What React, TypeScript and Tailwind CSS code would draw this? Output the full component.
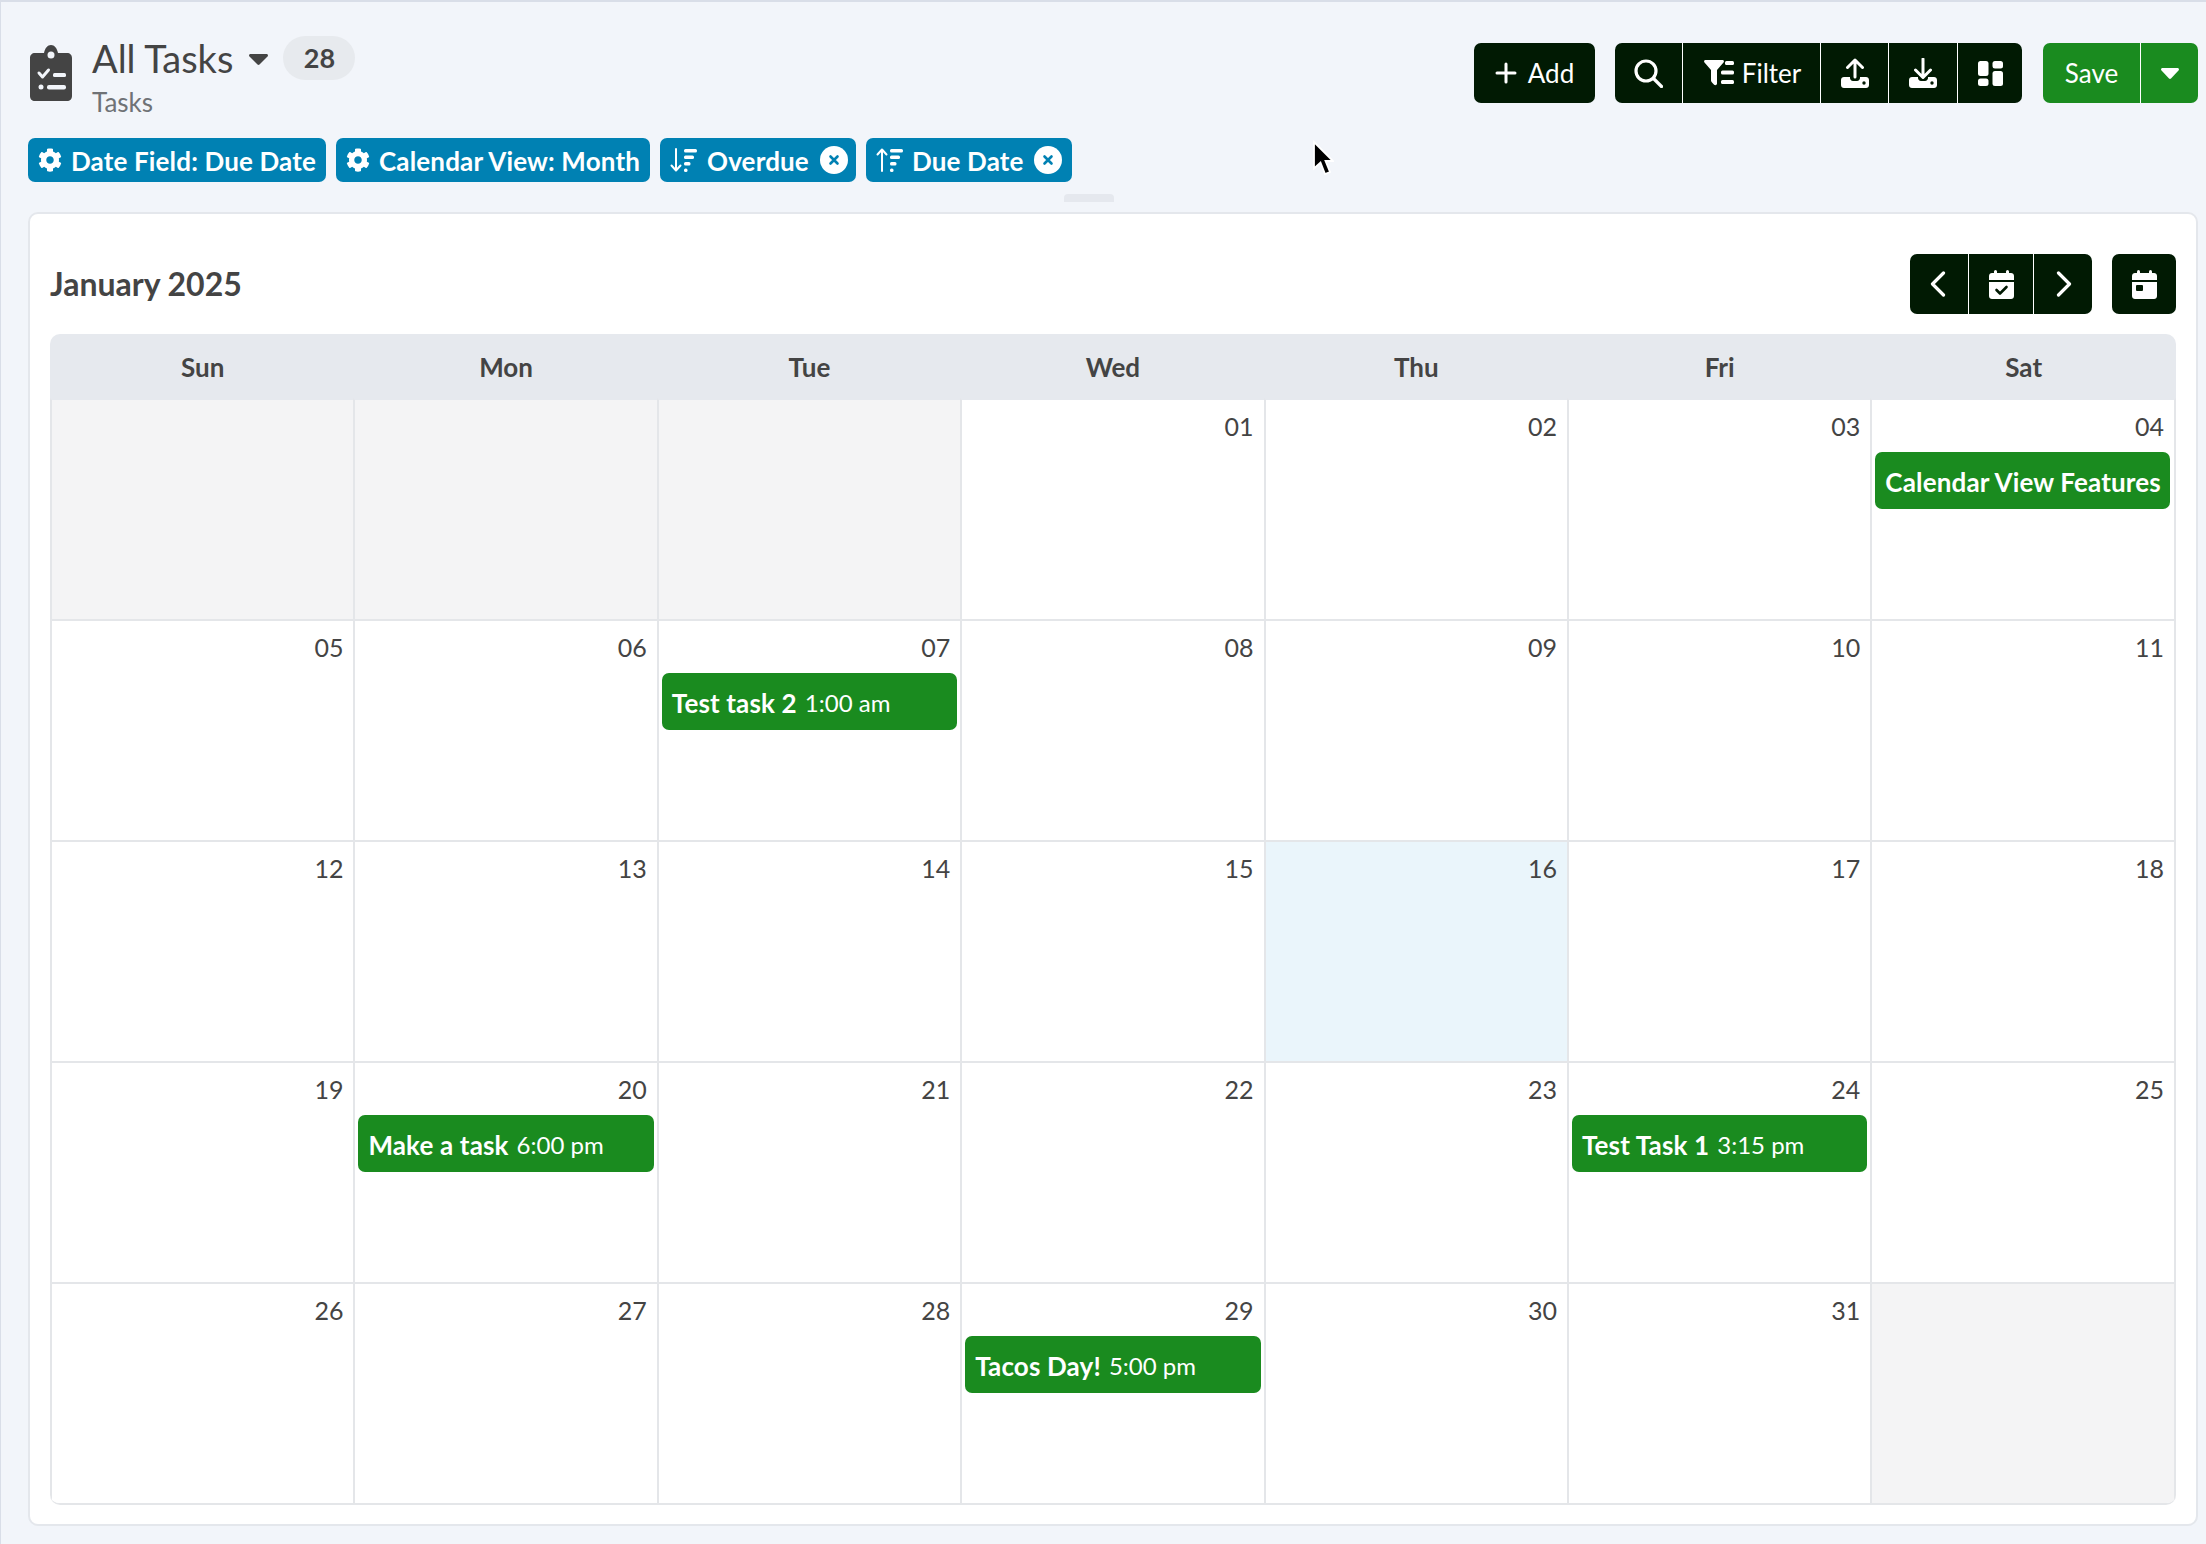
import React from "react";
import { FaCog } from "react-icons/fa";

const ff = "font-['Lato','Liberation_Sans',sans-serif]";

function ClipboardIcon() {
  return (
    <svg width="42" height="56" viewBox="0 0 42 56" className="shrink-0">
      <path d="M5 8h9c1-5 3.500-8 7-8s6 3 7 8h9c3 0 5 2 5 5v38c0 3-2 5-5 5H5c-3 0-5-2-5-5V13c0-3 2-5 5-5z" fill="#444444" />
      <circle cx="21" cy="10" r="3.500" fill="#f2f5fa" />
      <path d="M9 28l3.500 4 6-7" fill="none" stroke="#f2f5fa" strokeWidth="3" strokeLinecap="round" strokeLinejoin="round" />
      <rect x="23" y="28" width="13" height="4" rx="1.500" fill="#f2f5fa" />
      <circle cx="11" cy="42" r="2.500" fill="#f2f5fa" />
      <rect x="17" y="40" width="19" height="4.500" rx="2" fill="#f2f5fa" />
    </svg>
  );
}

function SortIcon({ up }: { up?: boolean }) {
  return (
    <svg width="27" height="24" viewBox="0 0 27 24" className="shrink-0" fill="#ffffff">
      {up ? (
        <path d="M6 23V2M1.500 6.500L6 1.500l4.500 5" fill="none" stroke="#fff" strokeWidth="2" strokeLinecap="round" strokeLinejoin="round" />
      ) : (
        <path d="M6 1v21M1.500 17.500l4.500 5 4.500-5" fill="none" stroke="#fff" strokeWidth="2" strokeLinecap="round" strokeLinejoin="round" />
      )}
      <rect x="14" y="1" width="13" height="3.500" rx="1.500" />
      <rect x="14" y="7.500" width="10" height="3.500" rx="1.500" />
      <rect x="14" y="14" width="6.500" height="3.500" rx="1.500" />
      <rect x="14" y="20.500" width="3.500" height="3.500" rx="1.500" />
    </svg>
  );
}

function ClearDot() {
  return (
    <span className="flex h-[28px] w-[28px] shrink-0 items-center justify-center rounded-full bg-white">
      <svg width="12" height="12" viewBox="0 0 12 12">
        <path d="M2.500 2.500l7 7M9.500 2.500l-7 7" stroke="#0081b3" strokeWidth="2.600" strokeLinecap="round" />
      </svg>
    </span>
  );
}

function Chip({ children, w }: { children: React.ReactNode; w: string }) {
  return (
    <div className={`flex h-[44px] items-center rounded-[7px] bg-[#0081b3] pl-[10px] text-[26px] font-bold tracking-[0.15px] whitespace-nowrap text-white ${w}`}>
      {children}
    </div>
  );
}

function Search() {
  return (
    <svg width="29" height="29" viewBox="0 0 29 29" fill="none" stroke="#fff" strokeWidth="3.200" strokeLinecap="round">
      <circle cx="12" cy="12" r="10" />
      <path d="M19.500 19.500l8 8" />
    </svg>
  );
}

function FilterIcon() {
  return (
    <svg width="30" height="26" viewBox="0 0 30 26" fill="#fff">
      <path d="M1.500 0h17c1.300 0 1.900 1.500 1 2.400L13 10v13.500c0 1.500-1.800 2.200-2.900 1.200L8 22.500c-.6-.5-1-1.200-1-2V10L.5 2.400C-.4 1.500.2 0 1.500 0z" />
      <rect x="21" y="1" width="9" height="4" rx="1.500" />
      <rect x="17" y="10.500" width="13" height="4" rx="1.500" />
      <rect x="17" y="20" width="13" height="4" rx="1.500" />
    </svg>
  );
}

function TrayIcon({ down }: { down?: boolean }) {
  return (
    <svg width="28" height="30" viewBox="0 0 28 30" fill="#fff">
      {down ? (
        <path d="M14 1v18M6.500 12l7.500 7.500L21.500 12" fill="none" stroke="#fff" strokeWidth="3" strokeLinecap="round" strokeLinejoin="round" />
      ) : (
        <path d="M14 19V2M6.500 9.500L14 2l7.500 7.500" fill="none" stroke="#fff" strokeWidth="3" strokeLinecap="round" strokeLinejoin="round" />
      )}
      <path d="M3 19h6v1c0 1.500 1.200 3 3 3h4c1.800 0 3-1.500 3-3v-1h6c1.700 0 3 1.300 3 3v5c0 1.700-1.300 3-3 3H3c-1.700 0-3-1.300-3-3v-5c0-1.700 1.300-3 3-3z" />
      <circle cx="23" cy="25" r="1.700" fill="#011a03" />
    </svg>
  );
}

function WidgetsIcon() {
  return (
    <svg width="25" height="25" viewBox="0 0 25 25" fill="#fff">
      <rect x="0" y="0" width="10.500" height="15" rx="2.500" />
      <rect x="0" y="17.500" width="10.500" height="7.500" rx="2.500" />
      <rect x="14.500" y="0" width="10.500" height="7.500" rx="2.500" />
      <rect x="14.500" y="10" width="10.500" height="15" rx="2.500" />
    </svg>
  );
}

function CalendarIcon({ check }: { check?: boolean }) {
  return (
    <svg width="25" height="29" viewBox="0 0 25 29" fill="#fff">
      <rect x="5" y="0" width="3" height="6" rx="1.500" />
      <rect x="17" y="0" width="3" height="6" rx="1.500" />
      <path d="M3 3h19c1.700 0 3 1.300 3 3v4H0V6c0-1.700 1.300-3 3-3z" />
      <path d="M0 12h25v14c0 1.700-1.300 3-3 3H3c-1.700 0-3-1.300-3-3z" />
      {check ? (
        <path d="M7.500 20l3.500 3.500 6.500-6.500" fill="none" stroke="#011a03" strokeWidth="2.600" strokeLinecap="round" strokeLinejoin="round" />
      ) : (
        <rect x="4" y="15" width="7" height="6" rx="1" fill="#011a03" />
      )}
    </svg>
  );
}

type Ev = { title: string; time?: string };
type Day = { n?: string; ev?: Ev; today?: boolean };

const weeks: Day[][] = [
  [{}, {}, {}, { n: "01" }, { n: "02" }, { n: "03" }, { n: "04", ev: { title: "Calendar View Features" } }],
  [{ n: "05" }, { n: "06" }, { n: "07", ev: { title: "Test task 2", time: "1:00 am" } }, { n: "08" }, { n: "09" }, { n: "10" }, { n: "11" }],
  [{ n: "12" }, { n: "13" }, { n: "14" }, { n: "15" }, { n: "16", today: true }, { n: "17" }, { n: "18" }],
  [{ n: "19" }, { n: "20", ev: { title: "Make a task", time: "6:00 pm" } }, { n: "21" }, { n: "22" }, { n: "23" }, { n: "24", ev: { title: "Test Task 1", time: "3:15 pm" } }, { n: "25" }],
  [{ n: "26" }, { n: "27" }, { n: "28" }, { n: "29", ev: { title: "Tacos Day!", time: "5:00 pm" } }, { n: "30" }, { n: "31" }, {}],
];

const heads = ["Sun", "Mon", "Tue", "Wed", "Thu", "Fri", "Sat"];

function Cell({ d, last, first }: { d: Day; last: boolean; first: boolean }) {
  const bg = !d.n ? "bg-[#f4f4f5]" : d.today ? "bg-[#eaf5fb]" : "bg-white";
  return (
    <div className={`h-[221px] min-w-0 border-t-2 border-l-2 border-[#e4e6e9] pt-[11px] ${first ? "border-t-[#e6e9ee]" : ""} ${last ? "border-r-2" : ""} ${bg}`}>
      <div className="h-[30px] pr-[10px] text-right text-[25px] leading-[30px] text-[#444444]">{d.n}</div>
      {d.ev && (
        <div className={`mt-[11px] ml-[3px] flex h-[57px] items-center overflow-hidden rounded-[7px] bg-[#1a8b1f] pt-[3px] pl-[10px] whitespace-nowrap text-white ${last ? "mr-[4px]" : "mr-[3px]"}`}>
          <span className="text-[26px] font-bold tracking-[0.15px]">{d.ev.title}</span>
          {d.ev.time && <span className="ml-[8px] text-[24px]">{d.ev.time}</span>}
        </div>
      )}
    </div>
  );
}

export default function App() {
  return (
    <div className={`relative flex h-[1544px] w-[2206px] flex-col overflow-hidden border-t-2 border-l border-[#d9dee8] bg-[#f2f5fa] pr-[8px] pl-[27px] text-[#444444] ${ff}`}>
      <header className="flex h-[136px] shrink-0 items-start justify-between pt-[33px]">
        <div className="flex items-start">
          <div className="mt-[10px] ml-[2px]">
            <ClipboardIcon />
          </div>
          <div className="ml-[20px]">
            <div className="flex items-center">
              <h1 className="text-[38px] leading-[46px] font-normal text-[#444444]">All Tasks</h1>
              <svg width="19" height="11" viewBox="0 0 19 11" className="mt-[2px] ml-[16px]">
                <path d="M1.500 0h16c1.300 0 2 1.500 1 2.500l-8 8c-.6.600-1.400.600-2 0l-8-8C-.5 1.500.2 0 1.500 0z" fill="#444444" />
              </svg>
              <div className="ml-[15px] flex h-[44px] w-[72px] items-center justify-center rounded-full bg-[#e7eaee] text-[27px] font-bold">28</div>
            </div>
            <div className="mt-[6px] text-[26px] leading-[30px] text-[#6f7276]">Tasks</div>
          </div>
        </div>
        <div className="mt-[8px] flex h-[60px] items-stretch text-white">
          <button className="flex w-[121px] items-center justify-center gap-[11px] rounded-[7px] bg-[#011a03] text-[26px]">
            <svg width="22" height="22" viewBox="0 0 22 22" stroke="#fff" strokeWidth="3" strokeLinecap="round">
              <path d="M11 2v18M2 11h18" />
            </svg>
            Add
          </button>
          <div className="ml-[20px] flex overflow-hidden rounded-[7px] bg-[#011a03]">
            <button className="flex w-[67px] items-center justify-center"><Search /></button>
            <button className="flex w-[138px] items-center justify-center gap-[8px] border-l border-white pl-[2px] text-[26px]"><FilterIcon />Filter</button>
            <button className="flex w-[68px] items-center justify-center border-l border-white"><TrayIcon /></button>
            <button className="flex w-[69px] items-center justify-center border-l border-white"><TrayIcon down /></button>
            <button className="flex w-[65px] items-center justify-center border-l border-white"><WidgetsIcon /></button>
          </div>
          <div className="ml-[21px] flex overflow-hidden rounded-[7px] bg-[#1a8b1f]">
            <button className="flex w-[97px] items-center justify-center text-[26px]">Save</button>
            <button className="flex w-[58px] items-center justify-center border-l border-white">
              <svg width="18" height="11" viewBox="0 0 18 11"><path d="M1.500 0h15c1.300 0 2 1.500 1 2.500l-7.500 8c-.6.600-1.400.600-2 0l-7.500-8C-.5 1.500.2 0 1.500 0z" fill="#fff" /></svg>
            </button>
          </div>
        </div>
      </header>

      <div className="flex h-[44px] shrink-0 gap-[10px]">
        <Chip w="w-[298px]"><FaCog size={24} className="mr-[9px] shrink-0" /><span className="mt-[2px]">Date Field: Due Date</span></Chip>
        <Chip w="w-[314px]"><FaCog size={24} className="mr-[9px] shrink-0" /><span className="mt-[2px]">Calendar View: Month</span></Chip>
        <Chip w="w-[196px]"><SortIcon /><span className="mt-[2px] mr-[11px] ml-[10px]">Overdue</span><ClearDot /></Chip>
        <Chip w="w-[206px]"><SortIcon up /><span className="mt-[2px] mr-[10px] ml-[9px]">Due Date</span><ClearDot /></Chip>
      </div>

      <div className="mt-[12px] ml-[1036px] h-[8px] w-[50px] shrink-0 rounded-t-[4px] bg-[#e5e8ee]" />

      <main className="mt-[10px] flex h-[1314px] shrink-0 flex-col rounded-[10px] border-2 border-[#e4e7ec] bg-white px-[20px] pt-[40px]">
        <div className="flex h-[60px] shrink-0 items-center justify-between">
          <h2 className="text-[32px] font-bold text-[#444444]">January 2025</h2>
          <div className="flex h-[60px] text-white">
            <div className="flex overflow-hidden rounded-[7px] bg-[#011a03]">
              <button className="flex w-[58px] items-center justify-center pr-[2px]">
                <svg width="16" height="26" viewBox="0 0 16 26" fill="none" stroke="#fff" strokeWidth="3.200" strokeLinecap="round" strokeLinejoin="round"><path d="M13.500 2L2.500 13l11 11" /></svg>
              </button>
              <button className="flex w-[66px] items-center justify-center border-x border-white"><CalendarIcon check /></button>
              <button className="flex w-[58px] items-center justify-center pl-[2px]">
                <svg width="16" height="26" viewBox="0 0 16 26" fill="none" stroke="#fff" strokeWidth="3.200" strokeLinecap="round" strokeLinejoin="round"><path d="M2.500 2l11 11-11 11" /></svg>
              </button>
            </div>
            <button className="ml-[20px] flex w-[64px] items-center justify-center rounded-[7px] bg-[#011a03]"><CalendarIcon /></button>
          </div>
        </div>

        <div className="mt-[20px] overflow-hidden rounded-[10px] border-b-2 border-[#e4e6e9]">
          <div className="grid h-[64px] grid-cols-[repeat(6,303.4px)_1fr] items-center bg-[#e6e9ee] pt-[3px] pl-[1px]">
            {heads.map((h) => (
              <div key={h} className="text-center text-[26px] font-bold text-[#444444]">{h}</div>
            ))}
          </div>
          {weeks.map((w, i) => (
            <div key={i} className="grid grid-cols-[repeat(6,303.4px)_1fr]">
              {w.map((d, j) => (
                <Cell key={j} d={d} last={j === 6} first={i === 0} />
              ))}
            </div>
          ))}
        </div>
      </main>

      <svg width="22" height="37" viewBox="0 0 22 36" className="absolute top-[138px] left-[1311px]">
        <path d="M2 1.500V28l6.500-6 4.500 11.500 5-2-4.500-11H21z" fill="#000" stroke="#fff" strokeWidth="1.800" />
      </svg>
    </div>
  );
}
